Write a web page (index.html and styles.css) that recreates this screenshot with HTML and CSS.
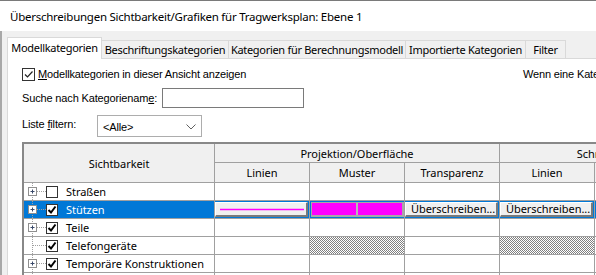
FILE: index.html
```html
<!DOCTYPE html>
<html lang="de">
<head>
<meta charset="utf-8">
<title>Sichtbarkeit/Grafiken</title>
<link rel="stylesheet" href="styles.css">
</head>
<body>
<div class="win">
  <div class="titlebar">Überschreibungen Sichtbarkeit/Grafiken für Tragwerksplan: Ebene 1</div>
  <div class="body">
    <div class="tabs">
      <div class="tab active t1">Modellkategorien</div>
      <div class="tab t2">Beschriftungskategorien</div>
      <div class="tab t3">Kategorien für Berechnungsmodell</div>
      <div class="tab t4">Importierte Kategorien</div>
      <div class="tab t5">Filter</div>
    </div>
    <div class="panel">
      <div class="row1">
        <label class="showlbl"><span class="cb big checked"><svg width="11" height="11" viewBox="0 0 11 11"><path d="M2 5.5 L4.5 8 L9.5 2.5" fill="none" stroke="#222" stroke-width="1.2"/></svg></span><span><u>M</u>odellkategorien in dieser Ansicht anzeigen</span></label>
        <span class="hint">Wenn eine Kategorie in dieser Ansicht nicht sichtbar ist</span>
      </div>
      <div class="row2">
        <span class="lbl search">Suche nach Kategorienam<u>e</u>:</span>
        <span class="input"></span>
      </div>
      <div class="row3">
        <span class="lbl filter">Liste <u>f</u>iltern:</span>
        <span class="select"><span>&lt;Alle&gt;</span><svg width="10" height="6" viewBox="0 0 10 6"><path d="M0.5 0.5 L5 5 L9.5 0.5" fill="none" stroke="#606060" stroke-width="1"/></svg></span>
      </div>
      <div class="gridwrap">
        <div class="grid">
          <div class="h hvis">Sichtbarkeit</div>
          <div class="h hproj">Projektion/Oberfläche</div>
          <div class="h hcut">Schnitt</div>
          <div class="h">Linien</div>
          <div class="h">Muster</div>
          <div class="h">Transparenz</div>
          <div class="h">Linien</div>
          <div class="h">Muster</div>

          <!-- Straßen -->
          <div class="c name"><svg class="tree" width="22" height="18" viewBox="0 0 22 18"><line x1="8.5" y1="0" x2="8.5" y2="18" class="dot"/><line x1="13" y1="8.5" x2="22" y2="8.5" class="dot"/><rect x="4.5" y="4.5" width="8" height="8" class="pbox"/><path d="M6.5 8.5 H10.5 M8.5 6.5 V10.5" class="plus"/></svg><span class="cb"></span><span class="txt">Straßen</span></div>
          <div class="c"></div><div class="c"></div><div class="c"></div><div class="c"></div><div class="c"></div>

          <!-- Stützen -->
          <div class="c name sel"><svg class="tree" width="22" height="18" viewBox="0 0 22 18"><line x1="8.5" y1="0" x2="8.5" y2="18" class="dot"/><line x1="13" y1="8.5" x2="22" y2="8.5" class="dot"/><rect x="4.5" y="4.5" width="8" height="8" class="pbox"/><path d="M6.5 8.5 H10.5 M8.5 6.5 V10.5" class="plus"/></svg><span class="cb"><svg width="10" height="10" viewBox="0 0 10 10"><path d="M1.5 5 L4 7.5 L8.5 1.5" fill="none" stroke="#000" stroke-width="2"/></svg></span><span class="txt">Stützen</span></div>
          <div class="c sel"><span class="btn linebtn"><svg class="mline" width="84" height="3" viewBox="0 0 84 3"><line x1="0" y1="1.5" x2="84" y2="1.5" stroke="#ff00ff" stroke-width="1.4"/></svg></span></div>
          <div class="c sel"><span class="btn patbtn"><span class="mag"></span><span class="div"></span><span class="mag"></span></span></div>
          <div class="c sel"><span class="btn txtbtn">Überschreiben...</span></div>
          <div class="c sel"><span class="btn txtbtn">Überschreiben...</span></div>
          <div class="c sel"></div>

          <!-- Teile -->
          <div class="c name"><svg class="tree" width="22" height="18" viewBox="0 0 22 18"><line x1="8.5" y1="0" x2="8.5" y2="18" class="dot"/><line x1="13" y1="8.5" x2="22" y2="8.5" class="dot"/><rect x="4.5" y="4.5" width="8" height="8" class="pbox"/><path d="M6.5 8.5 H10.5 M8.5 6.5 V10.5" class="plus"/></svg><span class="cb"><svg width="10" height="10" viewBox="0 0 10 10"><path d="M1.5 5 L4 7.5 L8.5 1.5" fill="none" stroke="#000" stroke-width="2"/></svg></span><span class="txt">Teile</span></div>
          <div class="c"></div><div class="c"></div><div class="c"></div><div class="c"></div><div class="c"></div>

          <!-- Telefongeräte -->
          <div class="c name"><svg class="tree" width="22" height="18" viewBox="0 0 22 18"><line x1="8.5" y1="0" x2="8.5" y2="18" class="dot"/><line x1="9" y1="8.5" x2="22" y2="8.5" class="dot"/></svg><span class="cb"><svg width="10" height="10" viewBox="0 0 10 10"><path d="M1.5 5 L4 7.5 L8.5 1.5" fill="none" stroke="#000" stroke-width="2"/></svg></span><span class="txt">Telefongeräte</span></div>
          <div class="c"></div><div class="c hatch"></div><div class="c"></div><div class="c hatch"></div><div class="c"></div>

          <!-- Temporäre Konstruktionen -->
          <div class="c name"><svg class="tree" width="22" height="18" viewBox="0 0 22 18"><line x1="8.5" y1="0" x2="8.5" y2="18" class="dot"/><line x1="13" y1="8.5" x2="22" y2="8.5" class="dot"/><rect x="4.5" y="4.5" width="8" height="8" class="pbox"/><path d="M6.5 8.5 H10.5 M8.5 6.5 V10.5" class="plus"/></svg><span class="cb"><svg width="10" height="10" viewBox="0 0 10 10"><path d="M1.5 5 L4 7.5 L8.5 1.5" fill="none" stroke="#000" stroke-width="2"/></svg></span><span class="txt">Temporäre Konstruktionen</span></div>
          <div class="c"></div><div class="c"></div><div class="c"></div><div class="c"></div><div class="c"></div>

          <!-- next row -->
          <div class="c name"><svg class="tree" width="22" height="18" viewBox="0 0 22 18"><line x1="8.5" y1="0" x2="8.5" y2="18" class="dot"/></svg></div>
          <div class="c"></div><div class="c"></div><div class="c"></div><div class="c"></div><div class="c"></div>
        </div>
      </div>
    </div>
  </div>
</div>
</body>
</html>
```

FILE: styles.css
```css
* { box-sizing: border-box; }
html, body { margin: 0; padding: 0; }
body {
  width: 596px;
  height: 275px;
  overflow: hidden;
  background: #f0f0f0;
  font-family: "Noto Sans", sans-serif;
  font-size: 12px;
  color: #000;
}
.win { width: 596px; height: 275px; border-top: 1px solid #7a7a7a; }
.titlebar {
  height: 30px;
  background: #fff;
  padding-left: 10px;
  font-family: "Noto Sans", sans-serif;
  font-size: 11.5px;
  letter-spacing: -0.25px;
  line-height: 31px;
  white-space: nowrap;
}
.body {
  height: 244px;
  border-left: 2px solid #a8a8a8;
  padding-left: 5px;
  padding-top: 6px;
  overflow: hidden;
}
.tabs { display: flex; align-items: flex-end; height: 21px; position: relative; z-index: 1; }
.tab {
  flex: none;
  height: 18px;
  border: 1px solid #d9d9d9;
  border-bottom: none;
  border-left: none;
  background: #f0f0f0;
  text-align: center;
  line-height: 18px;
  white-space: nowrap;
  font-family: "Noto Sans", sans-serif;
  font-size: 11px;
  letter-spacing: -0.3px;
}
.tab.active {
  height: 22px;
  margin-bottom: -1px;
  background: #fff;
  border-left: 1px solid #d9d9d9;
  line-height: 20px;
}
.t1 { width: 95px; }
.t2 { width: 127px; }
.t3 { width: 177px; }
.t4 { width: 120px; }
.t5 { width: 40px; }
.panel {
  width: 700px;
  height: 217px;
  background: #fff;
  border-top: 1px solid #d9d9d9;
  border-left: 1px solid #d9d9d9;
  padding: 8px 0 0 14px;
  font-family: "Liberation Sans", Arial, sans-serif;
  font-size: 11px;
  letter-spacing: -0.15px;
}
.row1 { display: flex; align-items: center; height: 14px; }
.showlbl { flex: none; display: flex; align-items: center; gap: 3px; width: 501px; }
.hint { flex: none; white-space: nowrap; }
.cb {
  display: inline-flex;
  align-items: center;
  justify-content: center;
  width: 12px;
  height: 12px;
  border: 1px solid #333;
  background: #fff;
  flex: none;
}
.cb.big { width: 13px; height: 13px; }
.row2 { display: flex; align-items: center; height: 20px; margin-top: 7px; }
.lbl { flex: none; }
.lbl.search { width: 140px; }
.input { flex: none; width: 142px; height: 20px; border: 1px solid #7a7a7a; background: #fff; }
.row3 { display: flex; align-items: flex-start; height: 22px; margin-top: 7px; }
.lbl.filter { width: 75px; padding-top: 3px; }
.select {
  flex: none;
  width: 105px;
  height: 22px;
  border: 1px solid #adadad;
  background: #fff;
  display: flex;
  align-items: center;
  justify-content: space-between;
  padding: 1px 5px 0 5px;
}
.gridwrap { margin-top: 5px; }
.grid {
  display: grid;
  grid-template-columns: 191px repeat(5, 95px);
  grid-template-rows: 19px 20px repeat(6, 18px);
  border-top: 2px solid #888;
  border-left: 2px solid #888;
  width: 668px;
  font-family: "Noto Sans", sans-serif;
  font-size: 11px;
  letter-spacing: -0.05px;
}
.h, .c { border-right: 1px solid #a0a0a0; border-bottom: 1px solid #a0a0a0; }
.h {
  background: #f0f0f0;
  display: flex;
  align-items: center;
  justify-content: center;
  white-space: nowrap;
  overflow: hidden;
}
.hvis { grid-row: 1 / 3; }
.hproj { grid-column: 2 / 5; }
.hcut { grid-column: 5 / 7; }
.c { background: #fff; position: relative; }
.c.sel { background: #0078d7; }
.name { display: flex; align-items: center; white-space: nowrap; }
.tree { flex: none; align-self: flex-start; }
.dot { stroke: #a0a0a0; stroke-width: 1; stroke-dasharray: 1 1; }
.pbox { fill: #fff; stroke: #8f8f8f; stroke-width: 1; }
.plus { stroke: #3a4a6a; stroke-width: 1; fill: none; }
.name .txt { margin-left: 8px; }
.name.sel .txt { color: #fff; }
.btn {
  position: absolute;
  left: 0;
  top: 1px;
  width: 93px;
  height: 15px;
  background: #f0f0f0;
  border-top: 1px solid #fff;
  border-left: 1px solid #fff;
  border-right: 2px solid #7a7a7a;
  border-bottom: 2px solid #7a7a7a;
}
.linebtn { display: flex; align-items: center; padding: 0 0 0 4px; }
.mline { display: block; flex: none; }
.patbtn { display: flex; padding: 1px; background: #a8a8a8; border-color: #a8a8a8; border-width: 0 1px 1px 0; left: 1px; width: 93px; height: 15px; }
.mag { flex: 1; background: #ff00ff; }
.div { width: 2px; background: #b8b8b8; }
.txtbtn { display: flex; align-items: center; padding-left: 5px; line-height: 12px; white-space: nowrap; overflow: hidden; }
.hatch { background: repeating-conic-gradient(#808080 0 25%, #fff 0 50%) 0 0 / 2px 2px; }
```
